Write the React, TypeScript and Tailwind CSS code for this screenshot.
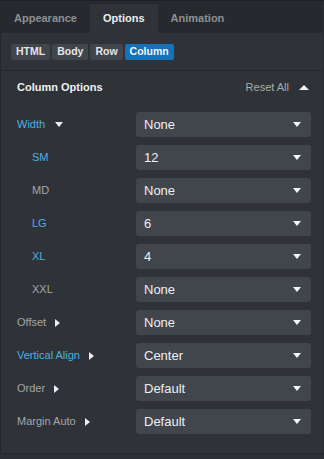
import React from "react";

const Down = ({ className = "" }: { className?: string }) => (
  <svg width="8" height="5" viewBox="0 0 8 5" className={className}>
    <path d="M0 0 L8 0 L4 5 Z" fill="currentColor" />
  </svg>
);
const Right = ({ className = "" }: { className?: string }) => (
  <svg width="5" height="8" viewBox="0 0 5 8" className={className}>
    <path d="M0 0 L5 4 L0 8 Z" fill="currentColor" />
  </svg>
);
const Up = ({ className = "" }: { className?: string }) => (
  <svg width="10" height="5" viewBox="0 0 10 5" className={className}>
    <path d="M0 5 L5 0 L10 5 Z" fill="currentColor" />
  </svg>
);

type Row = { label: string; value: string; blue?: boolean; sub?: boolean; arrow?: "down" | "right" };
const rows: Row[] = [
  { label: "Width", value: "None", blue: true, arrow: "down" },
  { label: "SM", value: "12", blue: true, sub: true },
  { label: "MD", value: "None", sub: true },
  { label: "LG", value: "6", blue: true, sub: true },
  { label: "XL", value: "4", blue: true, sub: true },
  { label: "XXL", value: "None", sub: true },
  { label: "Offset", value: "None", arrow: "right" },
  { label: "Vertical Align", value: "Center", blue: true, arrow: "right" },
  { label: "Order", value: "Default", arrow: "right" },
  { label: "Margin Auto", value: "Default", arrow: "right" },
];

export default function App() {
  return (
    <div
      className="w-[324px] h-[459px] overflow-hidden bg-[#2b2e32] flex flex-col"
      style={{ fontFamily: '"Liberation Sans", Arial, sans-serif' }}
    >
      <div className="h-px bg-[#1e2124]" />
      <div className="flex flex-col border-l border-[#24272b] border-r border-r-[#2a2d31] bg-[#2f3337]">
        {/* tabs */}
        <div className="flex h-[32px] pt-[3px] bg-[#26292d]">
          <div className="px-[13px] h-[29px] flex items-center text-[11px] font-bold text-[#8d9195]">Appearance</div>
          <div className="px-[13px] h-[29px] flex items-center text-[11px] font-bold text-[#eceef0] bg-[#2f3337]">Options</div>
          <div className="px-[13px] h-[29px] flex items-center text-[11px] font-bold text-[#8d9195]">Animation</div>
        </div>
        {/* tags */}
        <div className="flex gap-[2px] pl-[10px] pt-[11px] pb-[10px]">
          {["HTML", "Body", "Row"].map((t) => (
            <div key={t} className="h-[16px] px-[5px] flex items-center rounded-[2px] bg-[#41454c] text-[#e4e6e8] text-[10.5px] font-bold">
              {t}
            </div>
          ))}
          <div className="h-[16px] px-[5px] flex items-center rounded-[2px] bg-[#1672b8] text-[#f2f6fa] text-[10.5px] font-bold">Column</div>
        </div>
        <div className="h-px bg-[#24272b]" />
        {/* header */}
        <div className="flex items-center h-[32px] pl-[16px] pr-[14px]">
          <div className="text-[11px] font-bold text-[#eef0f2]">Column Options</div>
          <div className="ml-auto text-[11px] text-[#a9acb0]">Reset All</div>
          <Up className="ml-[10px] text-[#f0f2f4]" />
        </div>
        {/* rows */}
        <div className="flex flex-col gap-[8px] pt-[9px] pb-[19px] pl-[16px] pr-[12px]">
          {rows.map((r) => (
            <div key={r.label} className="flex items-center h-[25px]">
              <div
                className={`flex items-center w-[119px] text-[11px] ${r.sub ? "pl-[15px]" : ""} ${r.blue ? "text-[#4cb0e3]" : "text-[#a3a6aa]"}`}
              >
                <span>{r.label}</span>
                {r.arrow === "down" && <Down className="ml-[10px] text-[#eceef0]" />}
                {r.arrow === "right" && <Right className="ml-[9px] text-[#eceef0]" />}
              </div>
              <div className="flex-1 h-[25px] rounded-[3px] bg-[#41454c] flex items-center pl-[8px] pr-[10px] text-[13px] text-[#eef0f2]">
                <span>{r.value}</span>
                <Down className="ml-auto text-[#f4f6f8]" />
              </div>
            </div>
          ))}
        </div>
      </div>
      <div className="h-px bg-[#24272b]" />
    </div>
  );
}
